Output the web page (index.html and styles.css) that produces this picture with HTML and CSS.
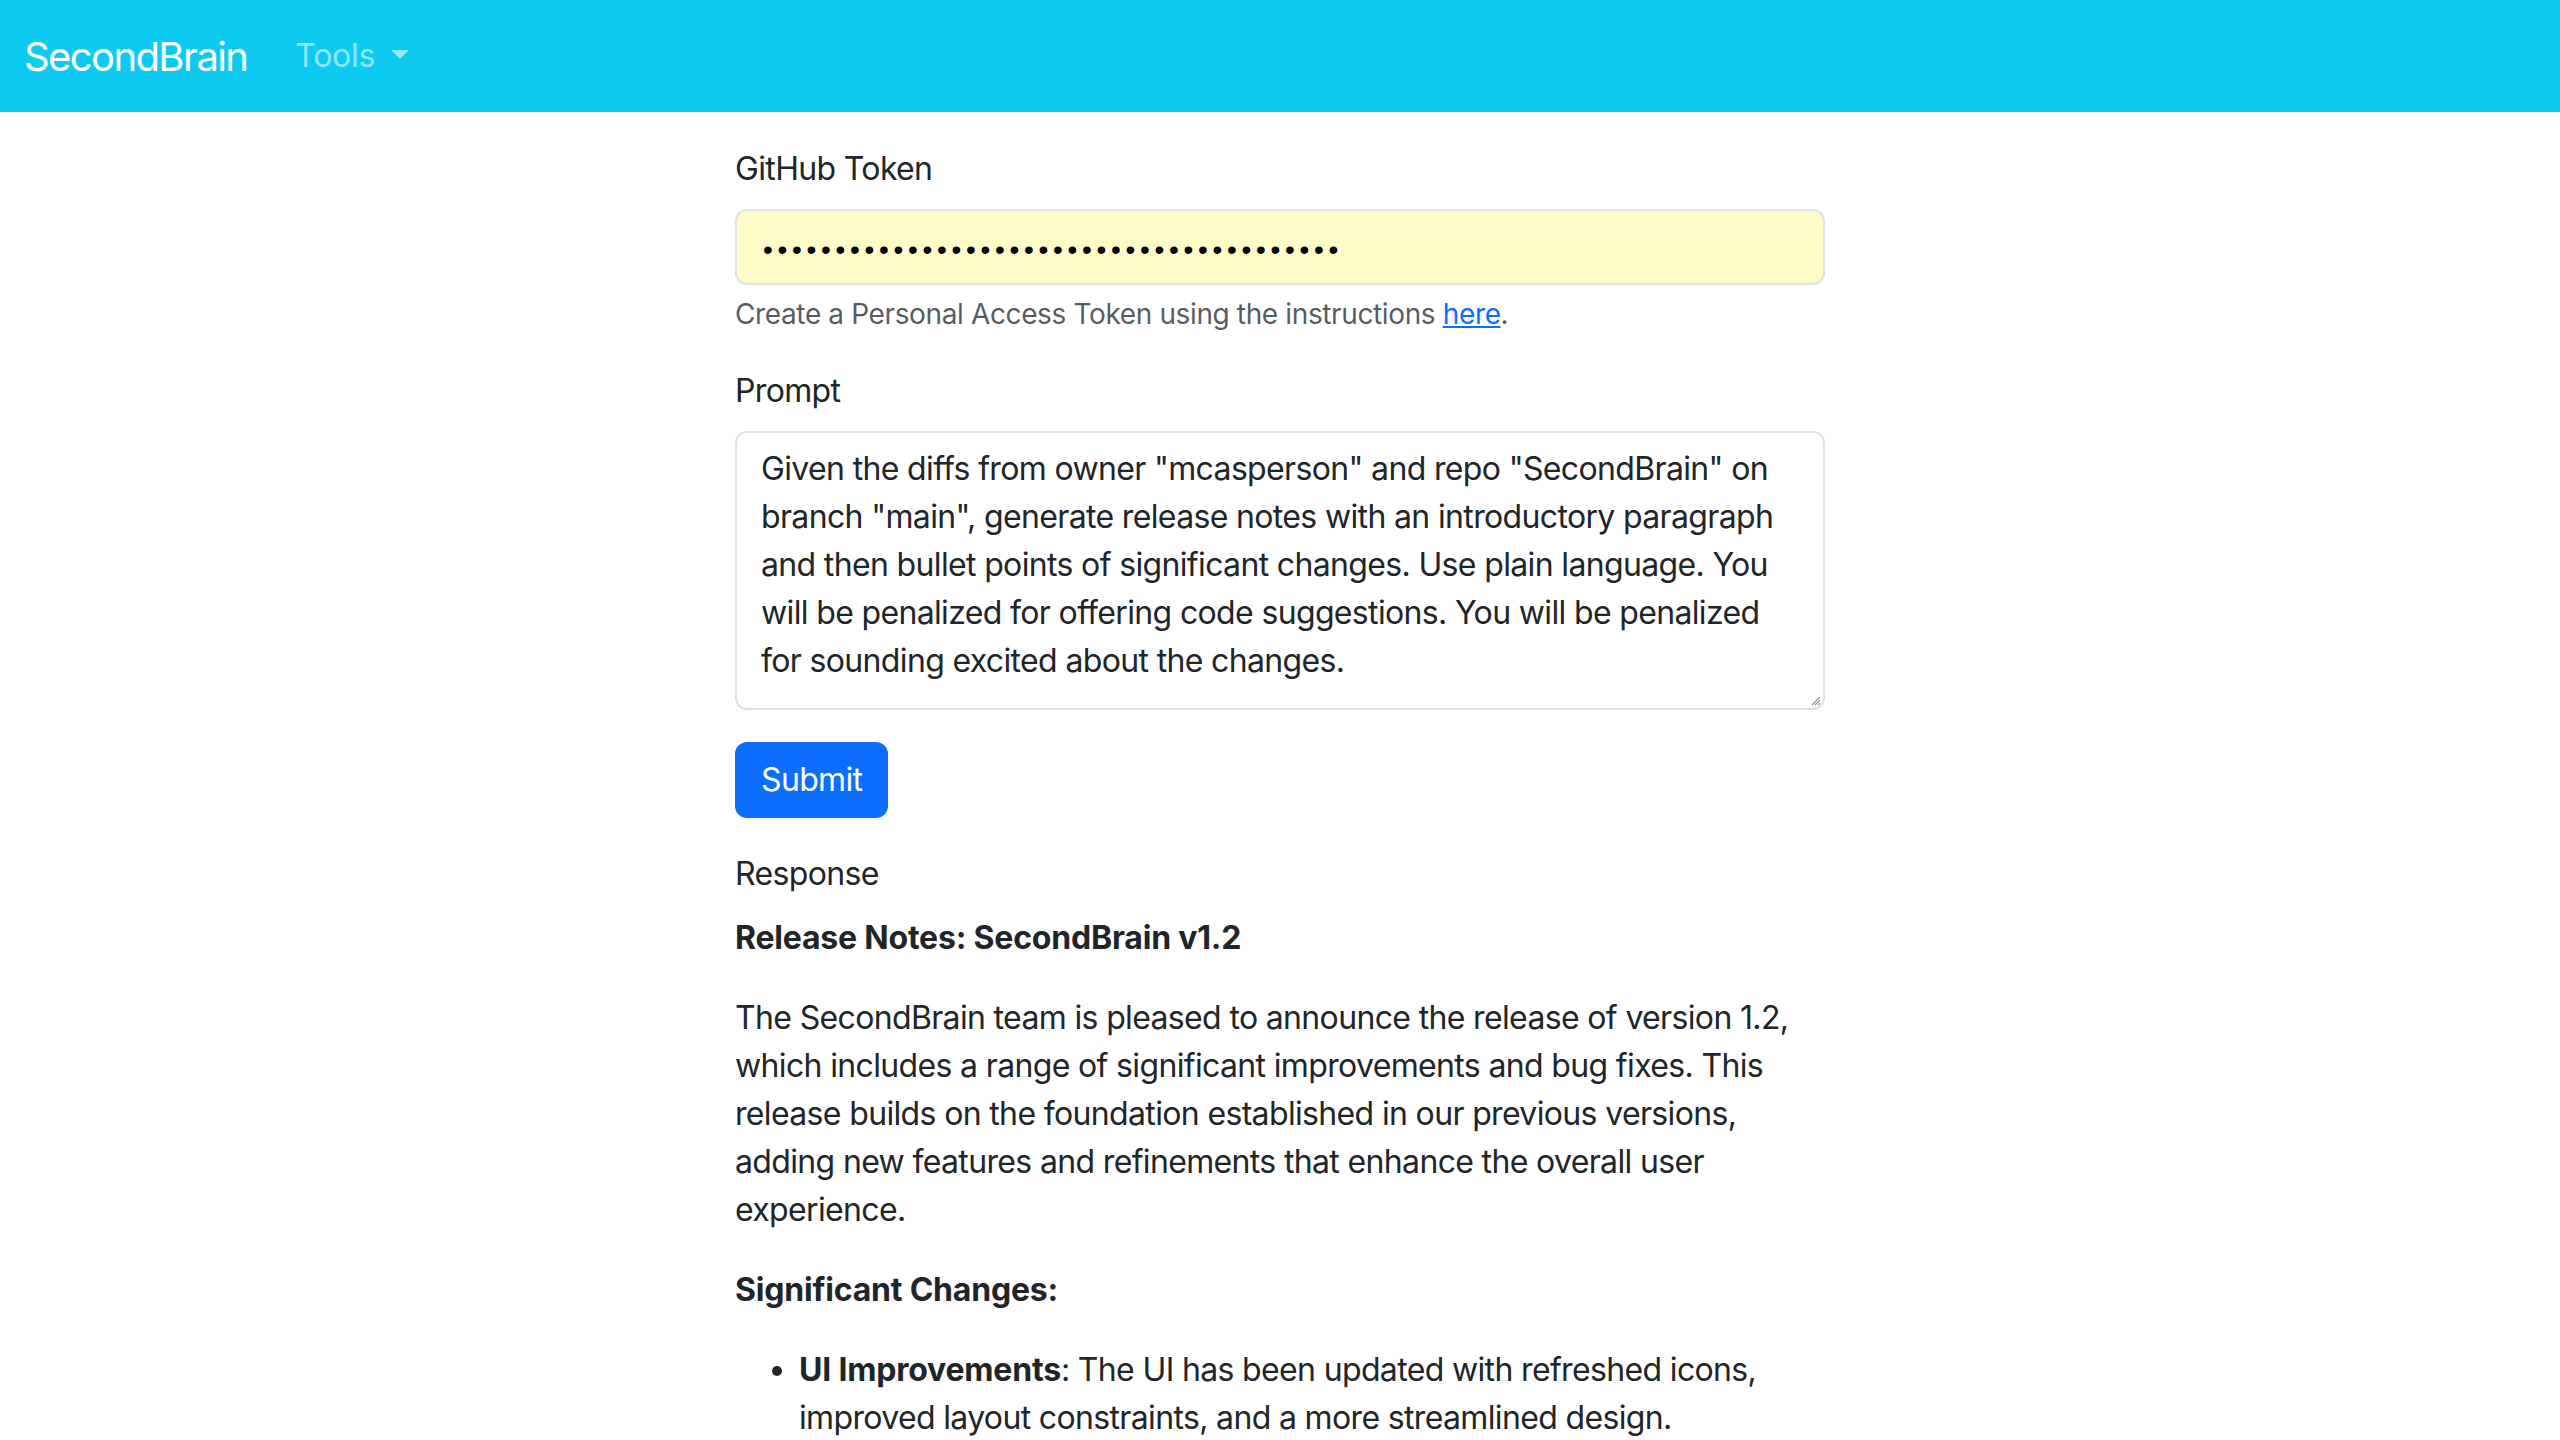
FILE: index.html
```html
<!DOCTYPE html>
<html lang="en">
<head>
<meta charset="utf-8">
<title>SecondBrain</title>
<link rel="stylesheet" href="styles.css">
</head>
<body>
<nav class="navbar">
  <a class="brand" href="#">SecondBrain</a>
  <a class="nav-link" href="#">Tools<span class="caret"></span></a>
</nav>
<main class="main">
  <div class="group">
    <label class="label">GitHub Token</label>
    <div class="control token"><span class="dots">••••••••••••••••••••••••••••••••••••••••</span></div>
    <div class="help">Create a Personal Access Token using the instructions <a href="#">here</a>.</div>
  </div>
  <div class="group">
    <label class="label">Prompt</label>
    <div class="control textarea">Given the diffs from owner "mcasperson" and repo "SecondBrain" on branch "main", generate release notes with an introductory paragraph and then bullet points of significant changes. Use plain language. You will be penalized for offering code suggestions. You will be penalized for sounding excited about the changes.<svg class="grip" width="12" height="12" viewBox="0 0 12 12"><path d="M11 3 L3 11 M11 6 L6 11 M11 9 L9 11" stroke="#9a9a9a" stroke-width="1.2"/></svg></div>
  </div>
  <div class="group">
    <button class="btn">Submit</button>
  </div>
  <div class="response-label">Response</div>
  <div class="response">
    <p><strong>Release Notes: SecondBrain v1.2</strong></p>
    <p>The SecondBrain team is pleased to announce the release of version 1.2, which includes a range of significant improvements and bug fixes. This release builds on the foundation established in our previous versions, adding new features and refinements that enhance the overall user experience.</p>
    <p><strong>Significant Changes:</strong></p>
    <ul>
      <li><strong>UI Improvements</strong>: The UI has been updated with refreshed icons, improved layout constraints, and a more streamlined design.</li>
    </ul>
  </div>
</main>
</body>
</html>
```
FILE: styles.css
```css
* { box-sizing: border-box; }
html, body { margin: 0; padding: 0; }
body {
  font-family: Inter, "Noto Sans", sans-serif;
  font-size: 32px;
  line-height: 1.5;
  color: #212529;
  background: #fff;
  letter-spacing: -0.65px;
}
.navbar {
  background: #0dcaf0;
  height: 112px;
  display: flex;
  align-items: center;
  padding: 0 24px;
}
.brand {
  font-size: 40px;
  color: #fff;
  text-decoration: none;
  margin-right: 32px;
  line-height: 1.5;
  letter-spacing: -1.6px;
  padding-top: 2px;
}
.nav-link {
  color: rgba(255,255,255,.55);
  text-decoration: none;
  padding: 16px;
  display: flex;
  align-items: center;
  letter-spacing: -0.3px;
}
.caret {
  display: inline-block;
  margin-left: 16px;
  margin-top: -4px;
  border-top: 9.6px solid;
  border-right: 9.6px solid transparent;
  border-left: 9.6px solid transparent;
}
.main {
  width: 1090px;
  margin: 33px auto 0;
}
.group { margin-bottom: 32px; }
.label { display: block; margin-bottom: 16px; }
.control {
  border: 2px solid #dee2e6;
  border-radius: 12px;
  padding: 12px 24px;
}
.token {
  height: 76px;
  background: #fefbc8;
  display: flex;
  align-items: center;
  padding-left: 26px;
}
.dots {
  font-family: "Liberation Sans", sans-serif;
  font-size: 28px;
  letter-spacing: 4.7px;
  color: #000;
  margin-top: 6px;
}
.help {
  margin-top: 8px;
  font-size: 28px;
  color: rgba(33,37,41,.75);
  letter-spacing: -0.37px;
}
.help a { color: #0d6efd; }
.textarea {
  height: 279px;
  position: relative;
}
.grip {
  position: absolute;
  right: 2px;
  bottom: 2px;
}
.btn {
  font-family: inherit;
  font-size: 32px;
  line-height: 1.5;
  letter-spacing: inherit;
  color: #fff;
  background: #0d6efd;
  border: 2px solid #0d6efd;
  border-radius: 12px;
  padding: 12px 24px;
  cursor: pointer;
}
.response-label { margin-bottom: 16px; }
.response p { margin: 0 0 32px; }
.response strong { font-weight: 700; letter-spacing: -0.2px; }
.response ul { margin: 0; padding-left: 64px; }
```
